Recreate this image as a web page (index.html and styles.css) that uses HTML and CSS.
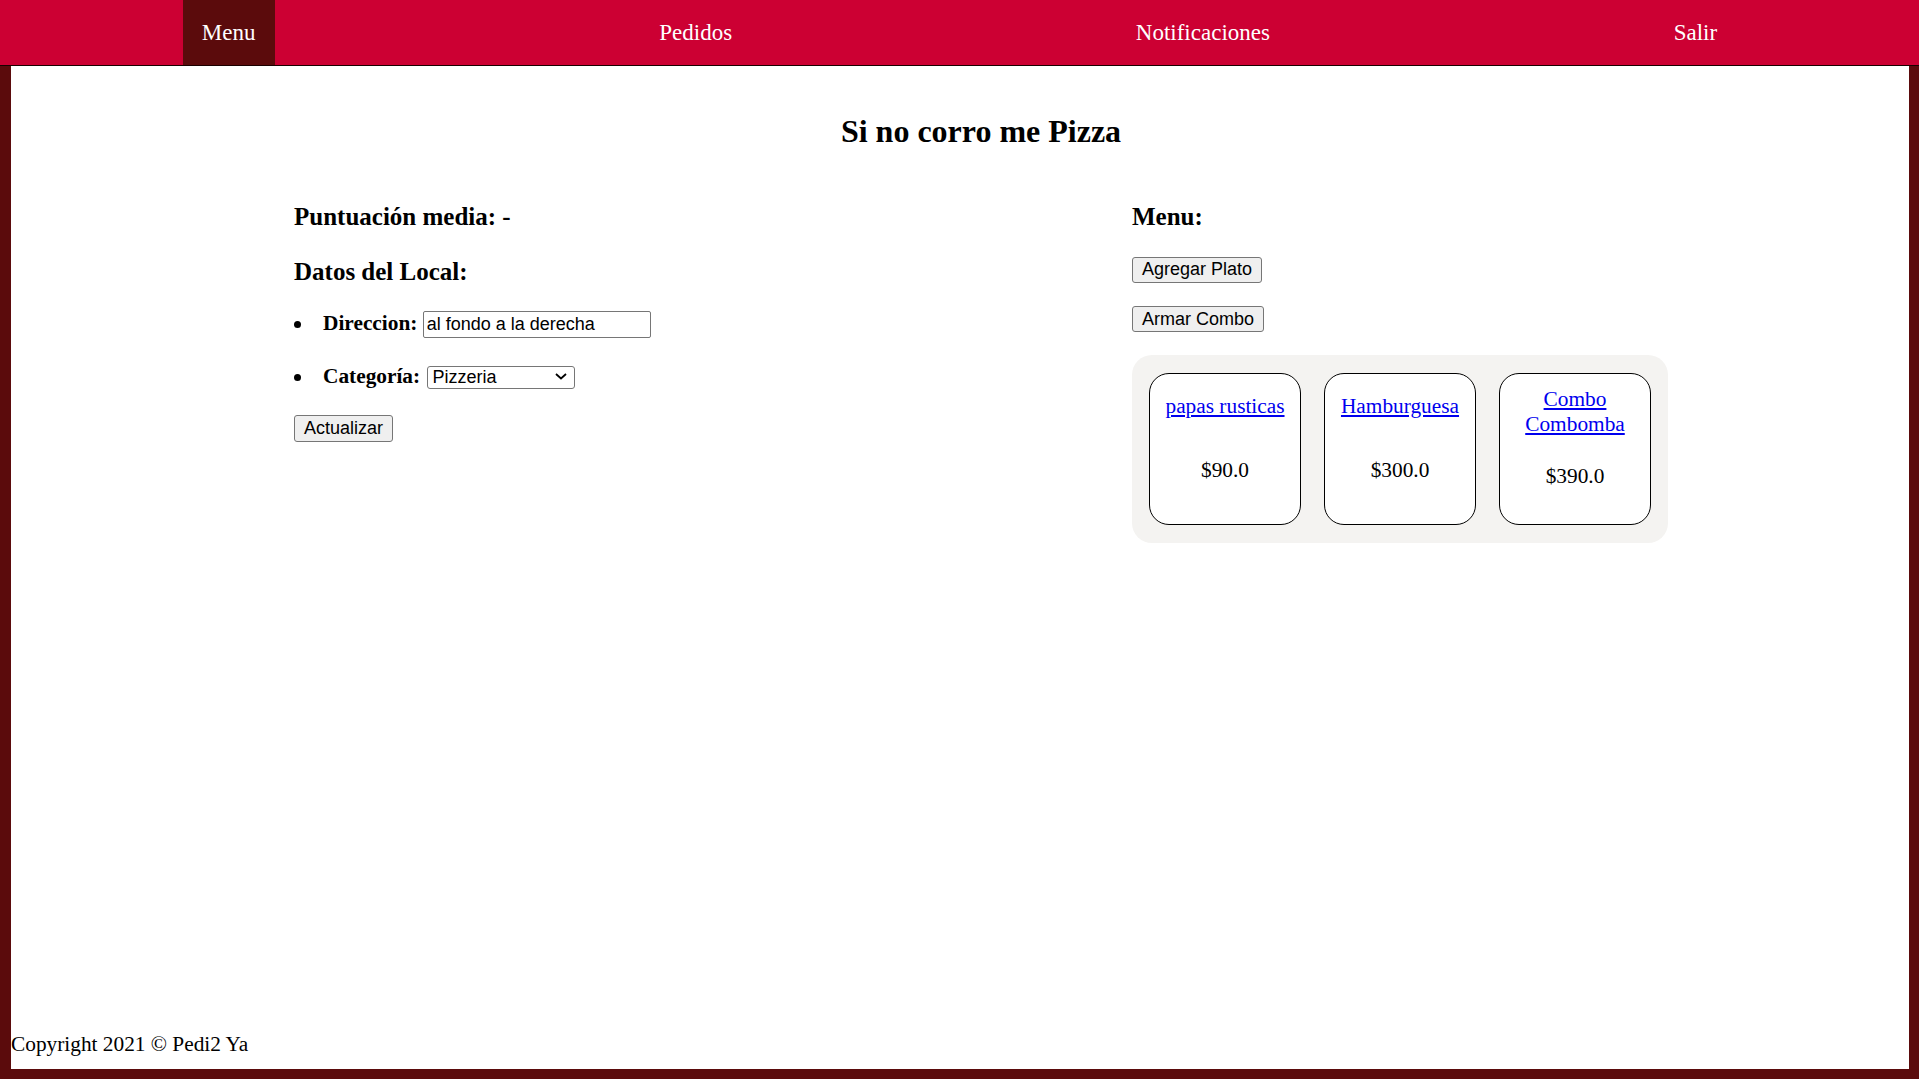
FILE: index.html
```html
<!DOCTYPE html>
<html lang="es">
<head>
<meta charset="utf-8">
<title>Si no corro me Pizza</title>
<link rel="stylesheet" href="styles.css">
</head>
<body>
<nav class="topnav">
  <a class="nav-item active" href="#">Menu</a>
  <a class="nav-item" href="#">Pedidos</a>
  <a class="nav-item" href="#">Notificaciones</a>
  <a class="nav-item" href="#">Salir</a>
</nav>
<div class="page">
  <main class="content">
    <h1 class="title">Si no corro me Pizza</h1>
    <div class="columns">
      <section class="col-left">
        <h3 class="section-heading">Puntuación media: -</h3>
        <h3 class="section-heading second">Datos del Local:</h3>
        <ul class="fields">
          <li class="field"><label class="field-label">Direccion:</label> <input class="text-input" type="text" value="al fondo a la derecha"></li>
          <li class="field"><label class="field-label">Categoría:</label> <span class="select-wrap"><select class="select"><option>Pizzeria</option><option>Hamburguesería</option></select><svg class="select-arrow" width="12" height="7" viewBox="0 0 12 7"><path d="M1 1 L6 5.5 L11 1" fill="none" stroke="#000" stroke-width="1.8"/></svg></span></li>
        </ul>
        <button class="btn" type="button">Actualizar</button>
      </section>
      <section class="col-right">
        <h3 class="section-heading">Menu:</h3>
        <div class="actions">
          <button class="btn" type="button">Agregar Plato</button>
          <button class="btn" type="button">Armar Combo</button>
        </div>
        <div class="dish-panel">
          <div class="dish-card">
            <a class="dish-link" href="#">papas rusticas</a>
            <p class="dish-price">$90.0</p>
          </div>
          <div class="dish-card">
            <a class="dish-link" href="#">Hamburguesa</a>
            <p class="dish-price">$300.0</p>
          </div>
          <div class="dish-card">
            <a class="dish-link" href="#">Combo Combomba</a>
            <p class="dish-price">$390.0</p>
          </div>
        </div>
      </section>
    </div>
  </main>
  <footer class="footer">Copyright 2021 © Pedi2 Ya</footer>
</div>
</body>
</html>
```

FILE: styles.css
```css
html, body {
  margin: 0;
  padding: 0;
}

body {
  background: #5b0b0c;
  font-family: "Liberation Serif", "Times New Roman", serif;
  color: #000;
}

.topnav {
  display: flex;
  justify-content: space-around;
  height: 65px;
  background: #cc0033;
  border-bottom: 1px solid #1a0000;
}

.nav-item {
  display: flex;
  align-items: center;
  padding: 0 19px;
  color: #fff;
  text-decoration: none;
  font-size: 23px;
}

.nav-item.active {
  background: #5b0b0c;
}

.page {
  background: #fff;
  margin: 0 10px 10px 11px;
  min-height: calc(100vh - 76px);
  display: flex;
  flex-direction: column;
}

.content {
  width: 1374px;
  margin-left: 283px;
}

.title {
  margin: 46.5px 0 0;
  font-size: 32px;
  line-height: normal;
  text-align: center;
  font-weight: bold;
}

.columns {
  display: grid;
  grid-template-columns: 1fr 536px;
  margin-top: 53px;
}

.section-heading {
  font-size: 25px;
  line-height: normal;
  margin: 0;
  font-weight: bold;
}

.section-heading.second {
  margin-top: 27px;
}

.fields {
  list-style: none;
  margin: 25px 0 0;
  padding: 0;
  font-size: 21.33px;
}

.field {
  margin-bottom: 26px;
}

.field::before {
  content: "";
  display: inline-block;
  width: 7px;
  height: 7px;
  border-radius: 50%;
  background: #000;
  margin-right: 22px;
  vertical-align: 2px;
}

.field-label {
  font-weight: bold;
}

.text-input {
  width: 228px;
  height: 27px;
  box-sizing: border-box;
  padding: 1px 3px;
  border: 1px solid #767676;
  border-radius: 2px;
  font-family: "Liberation Sans", Arial, sans-serif;
  font-size: 18px;
  color: #000;
  background: #fff;
}

.select-wrap {
  position: relative;
  display: inline-block;
  margin-left: 2px;
}

.select {
  -webkit-appearance: none;
  appearance: none;
  width: 148px;
  height: 23px;
  box-sizing: border-box;
  padding: 0 24px 0 4px;
  border: 1px solid #767676;
  border-radius: 3px;
  font-family: "Liberation Sans", Arial, sans-serif;
  font-size: 18px;
  line-height: 21px;
  color: #000;
  background-color: #fff;
}

.select-arrow {
  position: absolute;
  right: 8px;
  top: 50%;
  margin-top: -3px;
  pointer-events: none;
}

.btn {
  height: 26px;
  box-sizing: border-box;
  padding: 0 9px;
  border: 1px solid #767676;
  border-radius: 3px;
  background: #efefef;
  color: #000;
  font-family: "Liberation Sans", Arial, sans-serif;
  font-size: 18px;
  line-height: normal;
}

.col-left .btn {
  height: 27px;
}

.actions {
  display: flex;
  flex-direction: column;
  align-items: flex-start;
  gap: 23.4px;
  margin-top: 26.4px;
}

.dish-panel {
  display: flex;
  gap: 23px;
  margin-top: 22.5px;
  padding: 18px 17px;
  background: #f4f3f1;
  border-radius: 20px;
}

.dish-card {
  width: 152px;
  height: 152px;
  box-sizing: border-box;
  border: 1px solid #000;
  border-radius: 20px;
  background: #fff;
  display: flex;
  flex-direction: column;
  justify-content: space-around;
  align-items: center;
  text-align: center;
  padding: 0 6px 21px;
  font-size: 21.33px;
}

.dish-link {
  color: #0000ee;
  text-decoration: underline;
}

.dish-price {
  margin: 0;
}

.footer {
  margin-top: auto;
  padding-bottom: 12px;
  font-size: 21.33px;
  line-height: normal;
}
```
